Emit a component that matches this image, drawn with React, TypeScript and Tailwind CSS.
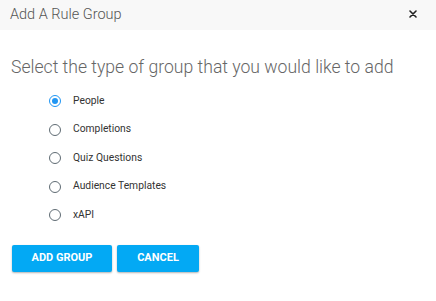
import React, { useState } from "react";

const options = ["People", "Completions", "Quiz Questions", "Audience Templates", "xAPI"];

export default function App() {
  const [sel, setSel] = useState("People");
  return (
    <div className="w-[436px] h-[301px] bg-white flex flex-col" style={{ fontFamily: "Roboto, sans-serif" }}>
      <div className="h-[30px] bg-[#f8f8f8] flex items-center justify-between pl-[10px] pr-[19px]">
        <span className="text-[14.5px] font-light text-[#555] leading-none">Add A Rule Group</span>
        <svg width="8" height="8" viewBox="0 0 8 8" className="text-[#222] mt-[-3px]">
          <path d="M1 1L7 7M7 1L1 7" stroke="currentColor" strokeWidth="1.6" strokeLinecap="round" />
        </svg>
      </div>
      <div className="pl-[11px] pt-[24px]">
        <h2 className="text-[17.6px] font-light text-[#666] leading-[26px] whitespace-nowrap">Select the type of group that you would like to add</h2>
      </div>
      <div className="flex flex-col pl-[49px] pt-[15px] gap-[16.5px]">
        {options.map((o) => (
          <label key={o} className="flex items-center gap-[12px] cursor-pointer h-[12px]" onClick={() => setSel(o)}>
            <span className={`w-[12px] h-[12px] rounded-full border-[1.5px] flex items-center justify-center ${sel === o ? "border-[#2196f3]" : "border-[#5f6b73]"}`}>
              {sel === o && <span className="w-[6px] h-[6px] rounded-full bg-[#2196f3]" />}
            </span>
            <span className="text-[10.3px] text-[#333] leading-none">{o}</span>
          </label>
        ))}
      </div>
      <div className="flex gap-[5px] pl-[12px] pt-[24px]">
        <button className="w-[100px] h-[27px] bg-[#03a9f4] text-white text-[11px] font-bold rounded-[2px] shadow-[0_1px_2px_rgba(0,0,0,0.3)]">ADD GROUP</button>
        <button className="w-[82px] h-[27px] bg-[#03a9f4] text-white text-[11px] font-bold rounded-[2px] shadow-[0_1px_2px_rgba(0,0,0,0.3)]">CANCEL</button>
      </div>
    </div>
  );
}
